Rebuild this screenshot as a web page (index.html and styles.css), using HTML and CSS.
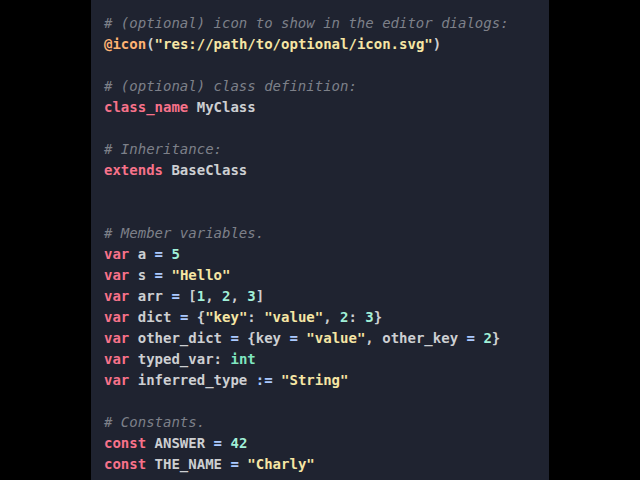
FILE: index.html
```html
<!DOCTYPE html>
<html>
<head>
<meta charset="utf-8">
<link rel="stylesheet" href="styles.css">
</head>
<body>
<div class="stage">
<pre class="code"><span class="c"># (optional) icon to show in the editor dialogs:</span>
<span class="an">@icon</span>(<span class="s">"res://path/to/optional/icon.svg"</span>)

<span class="c"># (optional) class definition:</span>
<span class="k">class_name</span> MyClass

<span class="c"># Inheritance:</span>
<span class="k">extends</span> BaseClass


<span class="c"># Member variables.</span>
<span class="k">var</span> a <span class="o">=</span> <span class="n">5</span>
<span class="k">var</span> s <span class="o">=</span> <span class="s">"Hello"</span>
<span class="k">var</span> arr <span class="o">=</span> [<span class="n">1</span>, <span class="n">2</span>, <span class="n">3</span>]
<span class="k">var</span> dict <span class="o">=</span> {<span class="s">"key"</span>: <span class="s">"value"</span>, <span class="n">2</span>: <span class="n">3</span>}
<span class="k">var</span> other_dict <span class="o">=</span> {key <span class="o">=</span> <span class="s">"value"</span>, other_key <span class="o">=</span> <span class="n">2</span>}
<span class="k">var</span> typed_var: <span class="t">int</span>
<span class="k">var</span> inferred_type <span class="o">:=</span> <span class="s">"String"</span>

<span class="c"># Constants.</span>
<span class="k">const</span> ANSWER <span class="o">=</span> <span class="n">42</span>
<span class="k">const</span> THE_NAME <span class="o">=</span> <span class="s">"Charly"</span></pre>
</div>
</body>
</html>
```

FILE: styles.css
```css
html, body {
  margin: 0;
  padding: 0;
  background: #000;
  height: 100%;
  overflow: hidden;
}
.stage {
  display: flex;
  height: 480px;
  padding-left: 91px;
}
.code {
  margin: 0;
  width: 458px;
  height: 480px;
  box-sizing: border-box;
  padding: 13px 0 0 13px;
  background: #1f2330;
  color: #cdcfd2;
  font-family: "DejaVu Sans Mono", "Liberation Mono", monospace;
  font-size: 14px;
  line-height: 21px;
  font-weight: bold;
  overflow: hidden;
}
.c { color: #7d8089; font-style: italic; font-weight: normal; }
.k { color: #f7728a; }
.s { color: #f6e6a4; }
.n { color: #a1f0d8; }
.o { color: #abc9ff; }
.an { color: #ffb373; }
.t { color: #7fe6c0; }
```
